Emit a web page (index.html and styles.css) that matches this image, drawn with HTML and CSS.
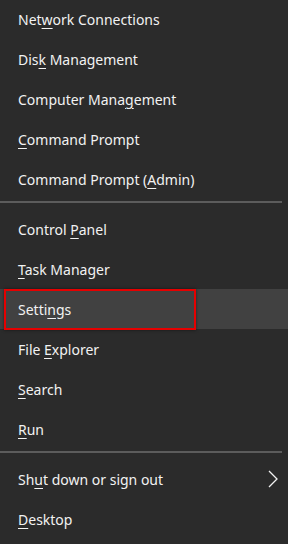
FILE: index.html
```html
<!DOCTYPE html>
<html lang="en">
<head>
    <meta charset="UTF-8">
    <title>Quick Link Menu</title>
    <link rel="stylesheet" href="styles.css">
</head>
<body>
    <div class="wx-menu">
        <div class="wx-item"><span>Net<u>w</u>ork Connections</span></div>
        <div class="wx-item"><span>Dis<u>k</u> Management</span></div>
        <div class="wx-item"><span>Computer Mana<u>g</u>ement</span></div>
        <div class="wx-item"><span><u>C</u>ommand Prompt</span></div>
        <div class="wx-item"><span>Command Prompt (<u>A</u>dmin)</span></div>

        <div class="wx-sep"></div>

        <div class="wx-item"><span>Control <u>P</u>anel</span></div>
        <div class="wx-item"><span><u>T</u>ask Manager</span></div>
        <div class="wx-item wx-active"><span>Setti<u>n</u>gs</span><span class="wx-mark"></span></div>
        <div class="wx-item"><span>File <u>E</u>xplorer</span></div>
        <div class="wx-item"><span><u>S</u>earch</span></div>
        <div class="wx-item"><span><u>R</u>un</span></div>

        <div class="wx-sep"></div>

        <div class="wx-item"><span>Sh<u>u</u>t down or sign out</span>
            <svg class="wx-chevron" width="10" height="20" viewBox="0 0 10 20">
                <path d="M1 2 L9 10 L1 18" fill="none" stroke="#f2f2f2" stroke-width="1.3"/>
            </svg>
        </div>
        <div class="wx-item"><span><u>D</u>esktop</span></div>
    </div>
</body>
</html>
```

FILE: styles.css
```css
:root {
    --wx-bg: #2b2b2b;
    --wx-hover: #414141;
    --wx-text: #f2f2f2;
    --wx-line: #5c5c5c;
    --wx-red: #e50000;
}

* {
    margin: 0;
    padding: 0;
    box-sizing: border-box;
}

body {
    background: var(--wx-bg);
    color: var(--wx-text);
    font-family: 'Noto Sans', 'Open Sans', Arial, sans-serif;
    font-size: 14px;
}

.wx-menu {
    margin-top: -1px;
    display: flex;
    flex-direction: column;
}

.wx-item {
    height: 40px;
    padding: 0 10px 0 18px;
    display: flex;
    align-items: center;
    position: relative;
    white-space: nowrap;
}

.wx-item u {
    text-decoration: underline;
    text-decoration-thickness: 1px;
    text-underline-offset: 3px;
}

.wx-active {
    background: var(--wx-hover);
}

/* red frame drawn on top of the selected row */
.wx-mark {
    position: absolute;
    left: 4px;
    top: 0;
    width: 192px;
    height: 41px;
    border: 2px solid var(--wx-red);
    box-shadow: 0 0 3px rgba(0,0,0,0.5);
}

.wx-chevron {
    margin-left: auto;
}

.wx-sep {
    height: 2px;
    margin: 2px 6px 6px 0;
    background: var(--wx-line);
}
```
